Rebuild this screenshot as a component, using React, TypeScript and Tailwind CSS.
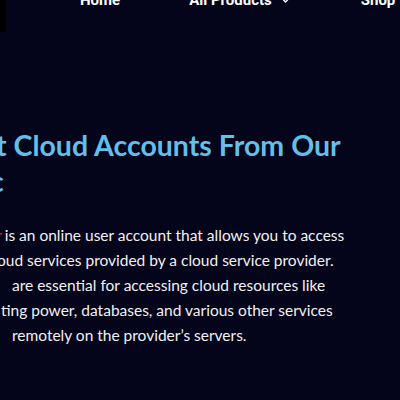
function Chevron() {
  return (
    <svg viewBox="0 0 10 6" className="ml-[10px] h-[5px] w-[7px]" fill="none" stroke="currentColor" strokeWidth="2">
      <path d="M1 1l4 4 4-4" />
    </svg>
  );
}

export default function App() {
  return (
    <div className="relative h-[400px] w-[400px] overflow-hidden bg-[#04041a] font-['Lato',sans-serif] text-white">
      <div className="absolute left-0 top-0 h-[32px] w-[6px] bg-black" />

      {/* top nav, scrolled partly out of view */}
      <nav className="-mt-[9px] flex items-center whitespace-nowrap font-['Roboto',Arial,sans-serif] text-[15px] font-bold leading-[18px]">
        <span className="ml-[80px]">Home</span>
        <span className="ml-[69px] flex items-center">
          All Products
          <Chevron />
        </span>
        <span className="ml-[72px]">Shop</span>
      </nav>

      <h1 className="mt-[118px] text-[28.5px] font-bold leading-[36px] text-[#62bfe9]">
        <div className="-ml-[4px] whitespace-nowrap">t Cloud Accounts From Our</div>
        <div className="-ml-[10px] whitespace-nowrap">c</div>
      </h1>

      <div className="mt-[24px] text-[15.5px] leading-[25px] text-[#f1f1f4]">
        <div className="whitespace-nowrap">
          <span className="-ml-[4px] text-[#e02424]">r</span>
          <span className="ml-[3px]">is an online user account that allows you to access</span>
        </div>
        <div className="-ml-[3px] whitespace-nowrap">oud services provided by a cloud service provider.</div>
        <div className="ml-[12px] whitespace-nowrap">are essential for accessing cloud resources like</div>
        <div className="ml-[1px] whitespace-nowrap">ting power, databases, and various other services</div>
        <div className="ml-[12px] whitespace-nowrap">remotely on the provider’s servers.</div>
      </div>
    </div>
  );
}
